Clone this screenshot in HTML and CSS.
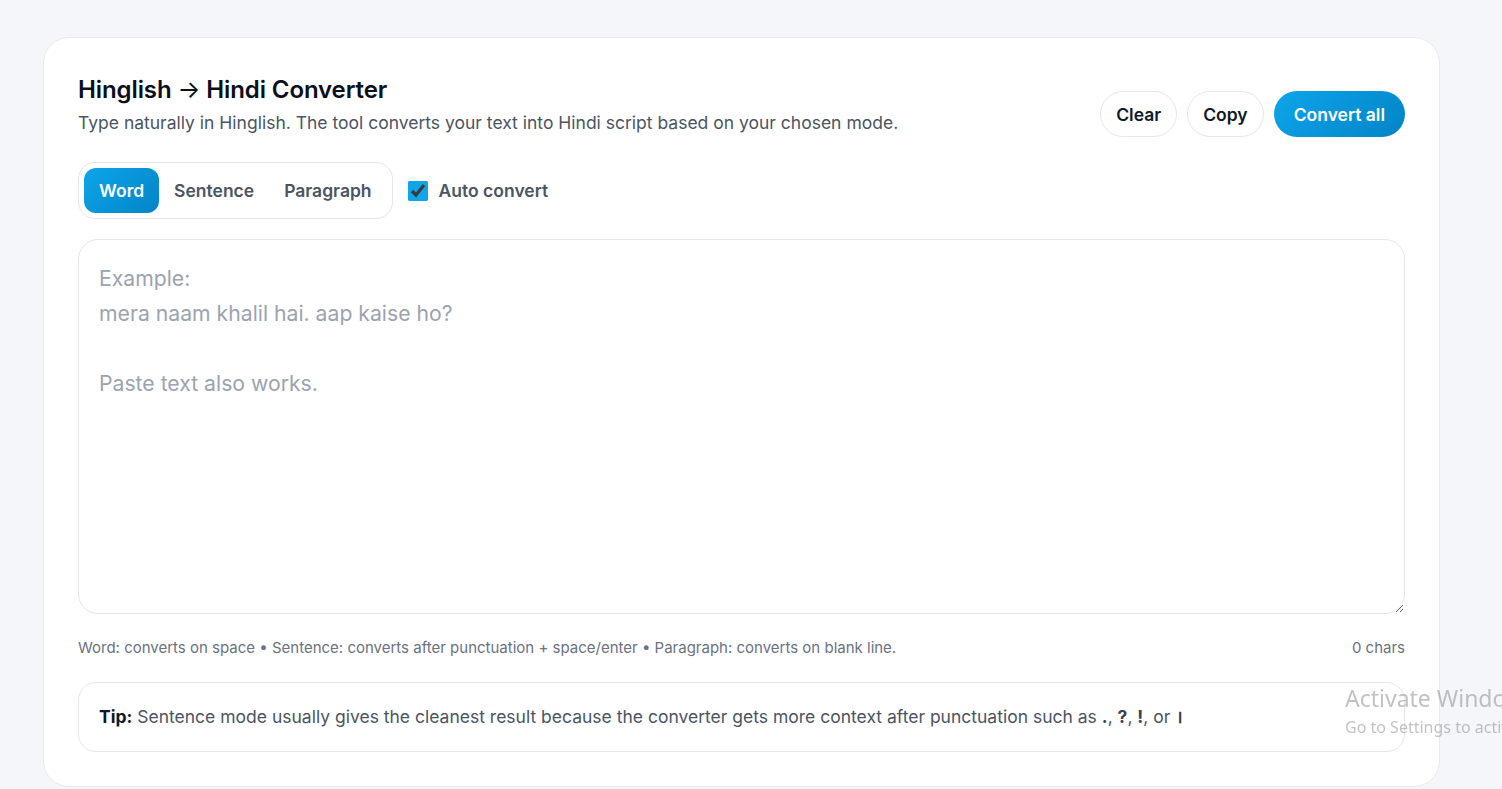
FILE: index.html
```html
<!DOCTYPE html>
<html lang="en">

<head>
    <meta charset="UTF-8">
    <meta name="viewport" content="width=device-width, initial-scale=1.0">
    <title>Hinglish → Hindi Converter</title>
    <link rel="stylesheet" href="styles.css">
</head>

<body>
    <div class="page">
        <div class="card">
            <div class="card-head">
                <div class="titles">
                    <h1>Hinglish <span class="arrow">→</span> Hindi Converter</h1>
                    <p class="subtitle">Type naturally in Hinglish. The tool converts your text into Hindi script based on your chosen mode.</p>
                </div>
                <div class="actions">
                    <button class="btn btn-light">Clear</button>
                    <button class="btn btn-light">Copy</button>
                    <button class="btn btn-primary">Convert all</button>
                </div>
            </div>

            <div class="toolbar">
                <div class="modes">
                    <button class="mode active">Word</button>
                    <button class="mode">Sentence</button>
                    <button class="mode">Paragraph</button>
                </div>
                <label class="auto">
                    <input type="checkbox" checked>
                    <span>Auto convert</span>
                </label>
            </div>

            <textarea class="editor" placeholder="Example:&#10;mera naam khalil hai. aap kaise ho?&#10;&#10;Paste text also works."></textarea>

            <div class="meta">
                <span>Word: converts on space • Sentence: converts after punctuation + space/enter • Paragraph: converts on blank line.</span>
                <span>0 chars</span>
            </div>

            <div class="tip">
                <strong>Tip:</strong> Sentence mode usually gives the cleanest result because the converter gets more context after punctuation such as <b>.</b>, <b>?</b>, <b>!</b>, or <b class="danda">।</b>
            </div>
        </div>
    </div>

    <div class="activate">
        <div class="activate-title">Activate Windows</div>
        <div class="activate-sub">Go to Settings to activate Windows.</div>
    </div>
</body>

</html>
```

FILE: styles.css
```css
html, body {
    margin: 0;
    overflow: hidden;
}

body {
    font-family: Inter, "Noto Sans", sans-serif;
    background-color: #f4f6f9;
    color: #111827;
}

.page {
    padding: 37px 0 0 43px;
}

/* Tarjeta principal */
.card {
    width: 1397px;
    box-sizing: border-box;
    background-color: #fff;
    border: 1px solid #e8eaee;
    border-radius: 26px;
    padding: 34px 34px 34px 34px;
}

.card-head {
    display: flex;
    justify-content: space-between;
    align-items: flex-start;
}

h1 {
    margin: 0;
    margin-top: 3px;
    font-size: 24px;
    font-weight: 600;
    letter-spacing: -0.1px;
    color: #0b0f19;
}

.arrow {
    font-weight: 400;
}

.subtitle {
    margin: 8px 0 0;
    font-size: 17.5px;
    color: #4b5563;
}

.actions {
    display: flex;
    gap: 10px;
    margin-top: 19px;
}

.btn {
    font-family: inherit;
    font-size: 17.5px;
    font-weight: 600;
    height: 46px;
    padding: 0 15px;
    border-radius: 23px;
    cursor: pointer;
}

.btn-light {
    background-color: #fff;
    border: 1px solid #e5e7eb;
    color: #111827;
}

.btn-primary {
    background: linear-gradient(135deg, #0ea5e9, #0284c7);
    border: none;
    color: #fff;
    padding: 0 20px;
}

/* Selector de modo */
.toolbar {
    display: flex;
    align-items: center;
    gap: 15px;
    margin-top: 25px;
}

.modes {
    display: flex;
    align-items: center;
    padding: 5px;
    border: 1px solid #e5e7eb;
    border-radius: 17px;
}

.mode {
    font-family: inherit;
    font-size: 17.5px;
    font-weight: 600;
    color: #4b5563;
    background: none;
    border: none;
    height: 45px;
    padding: 0 15px;
    border-radius: 12px;
    cursor: pointer;
}

.mode.active {
    background: linear-gradient(135deg, #0ea5e9, #0284c7);
    color: #fff;
}

.auto {
    display: flex;
    align-items: center;
    gap: 11px;
    font-size: 17.5px;
    font-weight: 600;
    color: #4b5563;
}

.auto input {
    width: 20px;
    height: 20px;
    margin: 0;
    accent-color: #0ea5e9;
}

/* Área de texto */
.editor {
    display: block;
    width: 100%;
    height: 375px;
    box-sizing: border-box;
    margin-top: 20px;
    padding: 21px 20px;
    border: 1px solid #e5e7eb;
    border-radius: 20px;
    font-family: inherit;
    font-size: 21.2px;
    line-height: 35px;
    color: #111827;
    outline: none;
}

.editor::placeholder {
    color: #9ca3af;
}

.meta {
    display: flex;
    justify-content: space-between;
    margin-top: 24px;
    font-size: 15px;
    color: #6b7280;
}

.tip {
    margin-top: 25px;
    padding: 21px 20px 23px;
    border: 1px solid #e5e7eb;
    border-radius: 18px;
    font-size: 17.5px;
    color: #4b5563;
}

.tip strong {
    color: #111827;
}

.tip b {
    color: #374151;
}

.tip .danda {
    font-family: "DejaVu Sans", sans-serif;
    font-weight: 700;
    margin-left: 1px;
}

/* Marca de agua del sistema */
.activate {
    position: fixed;
    left: 1345px;
    top: 682px;
    white-space: nowrap;
    font-family: "Noto Sans", "Open Sans", sans-serif;
    color: rgba(120, 120, 120, 0.45);
}

.activate-title {
    font-size: 23px;
}

.activate-sub {
    font-size: 16px;
    margin-top: 2px;
}
```
